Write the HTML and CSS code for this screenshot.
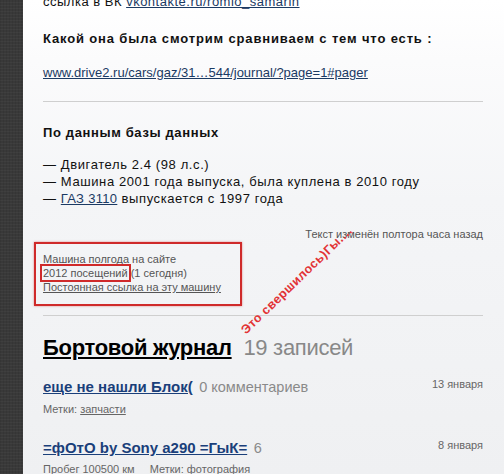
FILE: index.html
```html
<!DOCTYPE html>
<html lang="ru">
<head>
<meta charset="utf-8">
<title>Drive2</title>
<link rel="stylesheet" href="styles.css">
</head>
<body>
<div class="page">
  <aside class="rail"></aside>
  <main class="content">
    <p class="line first">ссылка в ВК <a href="#" class="link">vkontakte.ru/romio_samarin</a></p>
    <p class="bold-head">Какой она была смотрим сравниваем с тем что есть :</p>
    <p class="line"><a href="#" class="link">www.drive2.ru/cars/gaz/31…544/journal/?page=1#pager</a></p>
    <hr class="sep sep-top">
    <p class="bold-head db-head">По данным базы данных</p>
    <ul class="facts">
      <li>— Двигатель 2.4 (98 л.с.)</li>
      <li>— Машина 2001 года выпуска, была куплена в 2010 году</li>
      <li>— <a href="#" class="link">ГАЗ 3110</a> выпускается с 1997 года</li>
    </ul>
    <p class="edited">Текст изменён полтора часа назад</p>
    <div class="info">
      <div>Машина полгода на сайте</div>
      <div><span class="mark">2012 посещений</span> (1 сегодня)</div>
      <div><a href="#" class="perma">Постоянная ссылка на эту машину</a></div>
    </div>
    <hr class="sep sep-bottom">
    <span class="scribble">Это свершилось)Гы....</span>
    <h2 class="journal"><a href="#" class="journal-link">Бортовой журнал</a> <span class="count">19 записей</span></h2>
    <div class="entry">
      <div class="entry-row">
        <div><a href="#" class="entry-title">еще не нашли Блок(</a> <span class="comments">0 комментариев</span></div>
        <span class="date">13 января</span>
      </div>
      <div class="meta">Метки: <a href="#" class="tag">запчасти</a></div>
    </div>
    <div class="entry entry-2">
      <div class="entry-row">
        <div><a href="#" class="entry-title">=фОтО by Sony a290 =ГыК=</a> <span class="comments">6</span></div>
        <span class="date">8 января</span>
      </div>
      <div class="meta meta-2"><span class="mileage">Пробег 100500 км</span>Метки: <a href="#" class="tag">фотография</a></div>
    </div>
  </main>
</div>
</body>
</html>
```

FILE: styles.css
```css
* { box-sizing: border-box; }
html, body { margin: 0; padding: 0; height: 100%; overflow: hidden; }
body {
  font-family: Arial, "Liberation Sans", sans-serif;
  color: #111;
  background: #3a3a3a;
}
.page {
  display: flex;
  height: 474px;
}
.rail {
  width: 23px;
  flex: none;
  background-color: #393939;
  background-image:
    repeating-linear-gradient(0deg, rgba(255,255,255,0.03) 0 1px, transparent 1px 3px),
    repeating-linear-gradient(90deg, rgba(0,0,0,0.08) 0 1px, transparent 1px 3px);
}
.content {
  flex: 1;
  position: relative;
  padding: 0 21px 0 20px;
  background: linear-gradient(#ffffff 0px, #fbfbfc 60px, #f4f5f7 200px, #eff0f2 474px);
}
p { margin: 0; }
.line {
  font-size: 13px;
  line-height: 16px;
}
.first { margin-top: -6px; letter-spacing: 0.5px; }
.link { color: #1b3a63; text-decoration: underline; }
.bold-head {
  font-size: 13px;
  line-height: 16px;
  font-weight: bold;
  letter-spacing: 0.85px;
  margin-top: 21px;
  margin-bottom: 18px;
}
.sep {
  border: 0;
  height: 1px;
  background: #cfcfcf;
  margin: 0;
}
.sep-top { margin-top: 20px; }
.db-head { margin-top: 23px; margin-bottom: 15px; letter-spacing: 0.63px; }
.facts {
  list-style: none;
  margin: 0;
  padding: 0;
  font-size: 13px;
  line-height: 17px;
  letter-spacing: 0.6px;
}
.facts .link { letter-spacing: 0.3px; }
.edited {
  text-align: right;
  font-size: 11px;
  line-height: 13px;
  color: #555;
  margin-top: 21px;
}
.info {
  margin: 1px 0 0 -9px;
  width: 208px;
  height: 64px;
  border: 2px solid #cf2a2a;
  box-shadow: 0 0 2px rgba(200, 30, 30, 0.5);
  padding: 8px 0 0 7px;
  font-size: 11px;
  line-height: 14px;
  color: #555;
}
.mark {
  outline: 2px solid #cf2a2a;
  outline-offset: 1px;
}
.perma { color: #555; text-decoration: underline; }
.sep-bottom { margin-top: 9px; }
.scribble {
  position: absolute;
  left: 225px;
  top: 323px;
  transform: rotate(-44deg);
  transform-origin: left bottom;
  color: #e23436;
  font-size: 12.5px;
  line-height: 14px;
  font-weight: bold;
  letter-spacing: 0.5px;
  white-space: nowrap;
}
.journal {
  margin: 20px 0 0;
  font-size: 22px;
  line-height: 24px;
  font-weight: bold;
  letter-spacing: -0.3px;
}
.journal-link { color: #000; text-decoration: underline; }
.count { font-weight: normal; color: #888; margin-left: 6px; }
.entry { margin-top: 18px; }
.entry-2 { margin-top: 23px; }
.entry-row {
  display: flex;
  justify-content: space-between;
  align-items: flex-start;
}
.entry-title {
  font-size: 15px;
  line-height: 18px;
  font-weight: bold;
  color: #1a3f7a;
  text-decoration: underline;
}
.comments { font-size: 14.5px; line-height: 18px; color: #8a8a8a; margin-left: 2px; }
.date { font-size: 11px; line-height: 14px; color: #666; margin-top: -1px; }
.meta {
  font-size: 11px;
  line-height: 14px;
  color: #666;
  margin-top: 6px;
}
.meta-2 { margin-top: 5px; }
.mileage { margin-right: 15px; }
.tag { color: #666; text-decoration: underline; }
```
